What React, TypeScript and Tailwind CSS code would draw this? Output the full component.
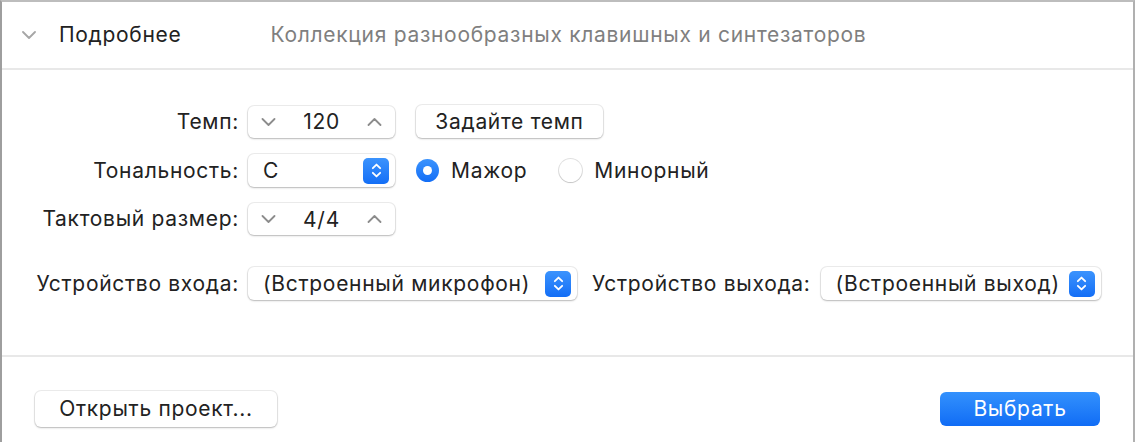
import React from "react";

const ChevronDown = ({ className }: { className?: string }) => (
  <svg viewBox="0 0 14 8" className={className} fill="none">
    <path d="M1 1l6 6 6-6" stroke="currentColor" strokeWidth="1.8" strokeLinecap="round" strokeLinejoin="round" />
  </svg>
);

const ChevronUp = ({ className }: { className?: string }) => (
  <svg viewBox="0 0 14 8" className={className} fill="none">
    <path d="M1 7l6-6 6 6" stroke="currentColor" strokeWidth="1.8" strokeLinecap="round" strokeLinejoin="round" />
  </svg>
);

const Stepper = ({ value }: { value: string }) => (
  <div className="w-[147px] h-[32px] rounded-[6px] bg-white shadow-[0_0_0_1px_rgba(0,0,0,0.07),0_1px_2px_rgba(0,0,0,0.22)] flex items-center justify-between px-[13px]">
    <ChevronDown className="w-[15px] h-[8px] text-[#8c8c8c]" />
    <span className="leading-none">{value}</span>
    <ChevronUp className="w-[15px] h-[8px] text-[#8c8c8c]" />
  </div>
);

const BlueArrows = () => (
  <div className="w-[26px] h-[26px] rounded-[5px] bg-gradient-to-b from-[#3b93fd] to-[#136ef6] flex items-center justify-center">
    <svg viewBox="0 0 12 18" className="w-[11px] h-[17px]" fill="none">
      <path d="M2 6.5l4-4 4 4M2 11.5l4 4 4-4" stroke="white" strokeWidth="2" strokeLinecap="round" strokeLinejoin="round" />
    </svg>
  </div>
);

const Popup = ({ value, width }: { value: string; width: string }) => (
  <div className={`${width} h-[33px] rounded-[6px] bg-white shadow-[0_0_0_1px_rgba(0,0,0,0.07),0_1px_2px_rgba(0,0,0,0.22)] flex items-center justify-between pl-[15px] pr-[6px]`}>
    <span className="leading-none">{value}</span>
    <BlueArrows />
  </div>
);

const Radio = ({ checked, label }: { checked: boolean; label: string }) => (
  <div className="flex items-center gap-[12px]">
    {checked ? (
      <div className="w-[23px] h-[23px] rounded-full bg-gradient-to-b from-[#3b93fd] to-[#136ef6] flex items-center justify-center">
        <div className="w-[9px] h-[9px] rounded-full bg-white" />
      </div>
    ) : (
      <div className="w-[23px] h-[23px] rounded-full bg-white shadow-[0_0_0_1px_rgba(0,0,0,0.12),0_1px_1px_rgba(0,0,0,0.12)]" />
    )}
    <span>{label}</span>
  </div>
);

const Label = ({ text }: { text: string }) => (
  <div className="w-[237px] text-right shrink-0">{text}</div>
);

export default function App() {
  return (
    <div className="w-[1135px] h-[442px] bg-white font-['Inter',sans-serif] text-[21px] tracking-[0.7px] text-[#222222] flex flex-col border-l-2 border-t-2 border-r-2 border-l-[#9e9e9e] border-r-[#b0b0b0] border-t-[#bdbdbd]">
      <div className="h-[68px] flex items-center shrink-0 border-b-2 border-[#e8e8e8]">
        <ChevronDown className="ml-[20px] w-[14px] h-[8px] text-[#a6a6a6]" />
        <span className="ml-[23px]">Подробнее</span>
        <span className="ml-[89px] text-[#7f7f7f]">Коллекция разнообразных клавишных и синтезаторов</span>
      </div>

      <div className="flex flex-col pt-[35px] h-[287px] shrink-0 border-b-2 border-[#e8e8e8]">
        <div className="flex items-center gap-[9px]">
          <Label text="Темп:" />
          <Stepper value="120" />
          <div className="ml-[12px] w-[187px] h-[33px] rounded-[6px] bg-white shadow-[0_0_0_1px_rgba(0,0,0,0.07),0_1px_2px_rgba(0,0,0,0.22)] flex items-center justify-center">
            Задайте темп
          </div>
        </div>
        <div className="flex items-center gap-[9px] mt-[16px]">
          <Label text="Тональность:" />
          <Popup value="C" width="w-[147px]" />
          <div className="ml-[12px] flex items-center gap-[32px]">
            <Radio checked label="Мажор" />
            <Radio checked={false} label="Минорный" />
          </div>
        </div>
        <div className="flex items-center gap-[9px] mt-[16px]">
          <Label text="Тактовый размер:" />
          <Stepper value="4/4" />
        </div>
        <div className="flex items-center gap-[9px] mt-[32px]">
          <Label text="Устройство входа:" />
          <Popup value="(Встроенный микрофон)" width="w-[329px]" />
          <span className="ml-[6px]">Устройство выхода:</span>
          <div className="ml-[1px]">
            <Popup value="(Встроенный выход)" width="w-[280px]" />
          </div>
        </div>
      </div>

      <div className="flex items-start justify-between pt-[34px] pl-[33px] pr-[33px]">
        <div className="w-[242px] h-[36px] rounded-[6px] bg-white shadow-[0_0_0_1px_rgba(0,0,0,0.07),0_1px_2px_rgba(0,0,0,0.22)] flex items-center justify-center">
          Открыть проект...
        </div>
        <div className="mt-[1px] w-[160px] h-[34px] rounded-[6px] bg-gradient-to-b from-[#3391fd] to-[#106cf5] flex items-center justify-center text-white">
          Выбрать
        </div>
      </div>
    </div>
  );
}
